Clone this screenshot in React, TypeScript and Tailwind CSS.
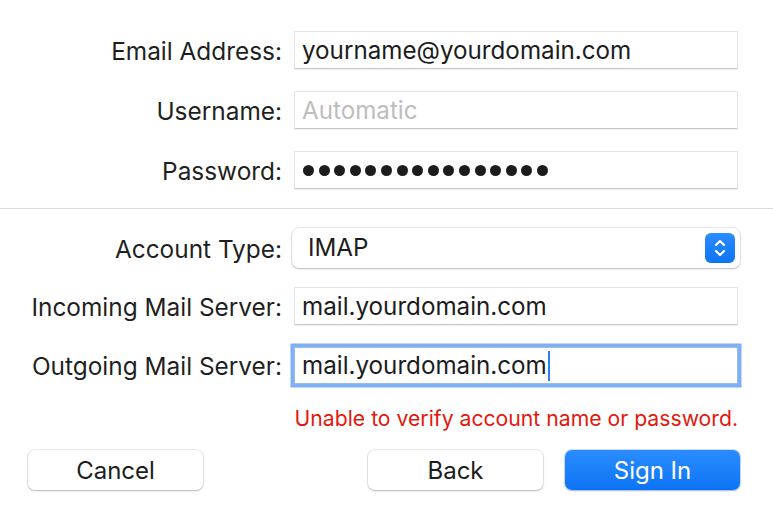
import React from "react";

const font = { fontFamily: "Inter, 'Liberation Sans', sans-serif" };

function Label({ children }: { children: React.ReactNode }) {
  return (
    <div className="w-[282px] shrink-0 pt-[2px] text-right text-[24.4px] leading-none text-[#1f1f1f]">
      {children}
    </div>
  );
}

function Field({ children, placeholder }: { children?: React.ReactNode; placeholder?: boolean }) {
  return (
    <div
      className={`ml-[12px] flex h-[38px] w-[444px] items-center border border-[#e4e4e4] border-b-[#c8c8c8] bg-white pl-[7px] pt-[2px] text-[24.2px] leading-none shadow-[0_1px_1px_rgba(0,0,0,0.06)] ${
        placeholder ? "text-[#bdbdbd]" : "text-[#1c1c1c]"
      }`}
    >
      {children}
    </div>
  );
}

export default function App() {
  return (
    <div className="h-[522px] w-[773px] overflow-hidden bg-white pt-[31px]" style={font}>
      <div className="flex flex-col gap-[22px]">
        <div className="flex items-center">
          <Label>Email Address:</Label>
          <Field>yourname@yourdomain.com</Field>
        </div>
        <div className="flex items-center">
          <Label>Username:</Label>
          <Field placeholder>Automatic</Field>
        </div>
        <div className="flex items-center">
          <Label>Password:</Label>
          <Field>
            <div className="-mt-[2px] flex gap-[4.6px] pl-[1px]">
              {Array.from({ length: 16 }).map((_, i) => (
                <span key={i} className="h-[11px] w-[11px] rounded-full bg-[#1c1c1c]" />
              ))}
            </div>
          </Field>
        </div>
      </div>

      <div className="mt-[19px] h-px w-full bg-[#dcdcdc]" />

      <div className="mt-[19px] flex items-center">
        <Label>Account Type:</Label>
        <div className="ml-[10px] flex h-[40px] w-[448px] items-center justify-between rounded-[7px] bg-white pl-[16px] pr-[5px] text-[24.2px] leading-none text-[#1c1c1c] shadow-[0_0_0_1px_rgba(0,0,0,0.07),0_1px_2px_rgba(0,0,0,0.22)]">
          <span className="pt-[1px]">IMAP</span>
          <div className="flex h-[30px] w-[30px] items-center justify-center rounded-[6px] bg-gradient-to-b from-[#2a8cff] to-[#0a74f5]">
            <svg width="14" height="22" viewBox="0 0 14 22" fill="none">
              <path d="M3 8 L7 4 L11 8" stroke="white" strokeWidth="2.2" strokeLinecap="round" strokeLinejoin="round" />
              <path d="M3 14 L7 18 L11 14" stroke="white" strokeWidth="2.2" strokeLinecap="round" strokeLinejoin="round" />
            </svg>
          </div>
        </div>
      </div>

      <div className="mt-[19px] flex items-center">
        <Label>Incoming Mail Server:</Label>
        <Field>mail.yourdomain.com</Field>
      </div>

      <div className="mt-[22px] flex items-center">
        <Label>Outgoing Mail Server:</Label>
        <div className="ml-[12px] flex h-[37px] w-[444px] items-center border border-[#9bbce8] bg-white pl-[7px] pt-[2px] text-[24.2px] leading-none text-[#1c1c1c] shadow-[0_0_0_3.5px_#7fb0f3]">
          <span>mail.yourdomain.com</span>
          <span className="-mt-[2px] ml-[1px] h-[30px] w-[2px] bg-[#2a7df6]" />
        </div>
      </div>

      <div className="mt-[24px] flex justify-end pr-[35px]">
        <span className="text-[21.2px] leading-[20px] text-[#e2180d]">Unable to verify account name or password.</span>
      </div>

      <div className="mt-[22px] flex items-center pl-[28px] pr-[33px]">
        <button className="flex h-[40px] w-[175px] items-center justify-center rounded-[7px] bg-white pt-[1px] text-[24px] text-[#1c1c1c] shadow-[0_0_0_1px_rgba(0,0,0,0.07),0_1px_2px_rgba(0,0,0,0.22)]">
          Cancel
        </button>
        <div className="flex-1" />
        <button className="flex h-[40px] w-[175px] items-center justify-center rounded-[7px] bg-white pt-[1px] text-[24px] text-[#1c1c1c] shadow-[0_0_0_1px_rgba(0,0,0,0.07),0_1px_2px_rgba(0,0,0,0.22)]">
          Back
        </button>
        <button className="ml-[22px] flex h-[40px] w-[175px] items-center justify-center rounded-[7px] bg-gradient-to-b from-[#2a8cff] to-[#0a74f5] pt-[1px] text-[24px] text-white shadow-[0_0_0_1px_rgba(0,90,220,0.2),0_1px_2px_rgba(0,0,0,0.2)]">
          Sign In
        </button>
      </div>
    </div>
  );
}
